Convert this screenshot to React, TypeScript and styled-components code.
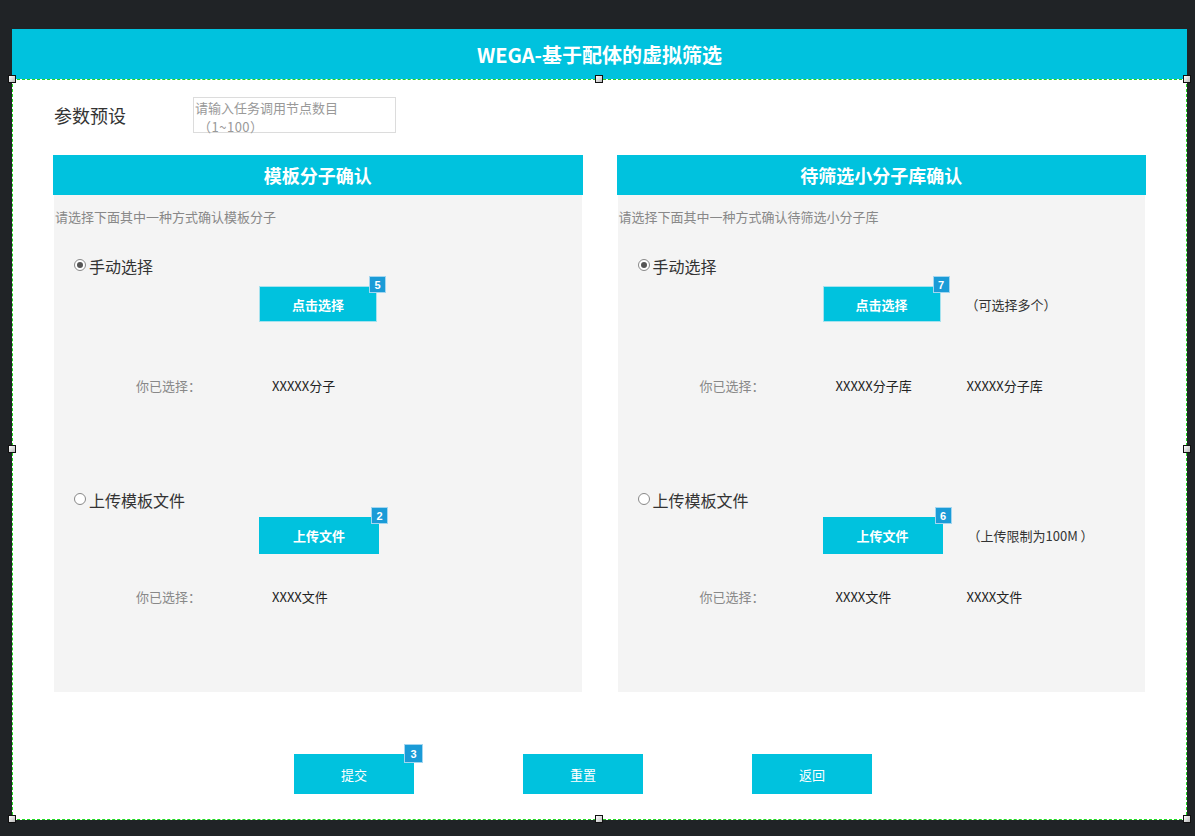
import React from 'react';
import styled, { createGlobalStyle } from 'styled-components';

const GlobalStyle = createGlobalStyle`
  html, body {
    margin: 0;
    padding: 0;
    background: #202326;
  }
  body {
    font-family: "Noto Sans CJK SC", "Liberation Sans", sans-serif;
  }
`;

const CYAN = '#00c2de';

const Page = styled.div`
  width: 1195px;
  height: 836px;
  padding: 29px 0 0 12px;
  box-sizing: border-box;
`;

const Frame = styled.div`
  position: relative;
  width: 1175px;
`;

const TitleBar = styled.div`
  height: 50px;
  background: ${CYAN};
  color: #fff;
  font-size: 20px;
  font-weight: 700;
  display: flex;
  align-items: center;
  justify-content: center;
`;

const Canvas = styled.div`
  height: 741px;
  box-sizing: border-box;
  border: 1px dashed #1ed81e;
  background: #fff;
  padding: 17px 40px 0 40px;
  display: flex;
  flex-direction: column;
`;

// selection handles of the editor, over the frame edges
const Handle = styled.span<{ $x: number; $y: number }>`
  position: absolute;
  left: ${p => p.$x - 4}px;
  top: ${p => p.$y - 4}px;
  width: 6px;
  height: 6px;
  border: 1px solid #111;
  background: linear-gradient(135deg, #ffffff, #b8b8b8);
`;

const ParamRow = styled.div`
  display: flex;
  align-items: center;
  height: 36px;
`;

const ParamLabel = styled.div`
  width: 140px;
  padding-left: 1px;
  box-sizing: border-box;
  font-size: 18px;
  color: #333;
`;

const FakeInput = styled.div`
  width: 203px;
  height: 36px;
  box-sizing: border-box;
  border: 1px solid #dcdcdc;
  font-size: 13px;
  line-height: 19px;
  color: #999;
  padding: 0 1px;
  margin-top: -1px;
  background: #fff;
`;

const Range = styled.span`
  letter-spacing: 0.5px;
  padding-left: 3px;
`;

const PanelRow = styled.div`
  display: flex;
  gap: 34px;
  margin-top: 22px;
`;

const PanelWrap = styled.div`
  flex: 1;
  display: flex;
  flex-direction: column;
`;

const PanelHead = styled.div`
  height: 40px;
  background: ${CYAN};
  color: #fff;
  font-size: 18px;
  font-weight: 700;
  display: flex;
  align-items: center;
  justify-content: center;
`;

const PanelBody = styled.div`
  height: 497px;
  margin: 0 1px;
  background: #f4f4f4;
  padding-top: 13px;
  box-sizing: border-box;
`;

const Desc = styled.div`
  font-size: 13px;
  line-height: 18px;
  color: #888;
  padding-left: 1px;
`;

const RadioRow = styled.div<{ $gap: number }>`
  display: flex;
  align-items: center;
  margin-top: ${p => p.$gap}px;
  padding-left: 20px;
  height: 20px;
  font-size: 16px;
  color: #333;
`;

const RadioDot = styled.span<{ $on?: boolean }>`
  width: 12px;
  height: 12px;
  box-sizing: border-box;
  border: 1px solid #888;
  border-radius: 50%;
  background: #fff;
  margin-right: 3px;
  margin-top: -3px;
  display: flex;
  align-items: center;
  justify-content: center;
  &::after {
    content: '';
    display: ${p => (p.$on ? 'block' : 'none')};
    width: 6px;
    height: 6px;
    border-radius: 50%;
    background: #555;
  }
`;

const ActionRow = styled.div<{ $gap: number }>`
  display: flex;
  align-items: center;
  margin-top: ${p => p.$gap}px;
  padding-left: 205px;
`;

const BadgeHost = styled.div`
  position: relative;
`;

const Btn = styled.div<{ $w: number; $h: number; $bold?: boolean; $outline?: boolean }>`
  width: ${p => p.$w}px;
  height: ${p => p.$h}px;
  box-sizing: border-box;
  background: ${CYAN};
  border: 1px solid ${p => (p.$outline ? '#a6e2ee' : CYAN)};
  color: #fff;
  font-size: 13px;
  font-weight: ${p => (p.$bold ? 700 : 400)};
  display: flex;
  align-items: center;
  justify-content: center;
`;

const Badge = styled.span<{ $size: number }>`
  position: absolute;
  right: -9px;
  top: -10px;
  width: ${p => p.$size}px;
  height: ${p => p.$size}px;
  box-sizing: border-box;
  background: #1a9bd7;
  border: 1px solid #a3d6f0;
  color: #fff;
  font-size: 11px;
  font-weight: 700;
  font-family: "Liberation Sans", sans-serif;
  display: flex;
  align-items: center;
  justify-content: center;
`;

const Note = styled.span`
  margin-left: 25px;
  font-size: 13px;
  color: #333;
`;

const PickedRow = styled.div<{ $gap: number }>`
  display: flex;
  align-items: center;
  height: 18px;
  margin-top: ${p => p.$gap}px;
  padding-left: 82px;
  font-size: 13px;
`;

const PickedLabel = styled.span`
  width: 136px;
  color: #888;
`;

const PickedValue = styled.span`
  width: 131px;
  color: #222;
`;

const FooterRow = styled.div`
  display: flex;
  gap: 109px;
  margin-top: 62px;
  padding-left: 241px;
`;

type PanelProps = {
  title: string;
  desc: string;
  manualBadge: string;
  uploadBadge: string;
  manualNote?: string;
  uploadNote?: string;
  manualPicks: string[];
  uploadPicks: string[];
};

const Panel = ({ title, desc, manualBadge, uploadBadge, manualNote, uploadNote, manualPicks, uploadPicks }: PanelProps) => (
  <PanelWrap>
    <PanelHead>{title}</PanelHead>
    <PanelBody>
      <Desc>{desc}</Desc>
      <RadioRow $gap={30}>
        <RadioDot $on />
        手动选择
      </RadioRow>
      <ActionRow $gap={10}>
        <BadgeHost>
          <Btn $w={118} $h={36} $bold $outline>点击选择</Btn>
          <Badge $size={17}>{manualBadge}</Badge>
        </BadgeHost>
        {manualNote && <Note>{manualNote}</Note>}
      </ActionRow>
      <PickedRow $gap={54}>
        <PickedLabel>你已选择：</PickedLabel>
        {manualPicks.map((v, i) => <PickedValue key={i}>{v}</PickedValue>)}
      </PickedRow>
      <RadioRow $gap={96}>
        <RadioDot />
        上传模板文件
      </RadioRow>
      <ActionRow $gap={7}>
        <BadgeHost>
          <Btn $w={120} $h={37} $bold>上传文件</Btn>
          <Badge $size={17}>{uploadBadge}</Badge>
        </BadgeHost>
        {uploadNote && <Note>{uploadNote}</Note>}
      </ActionRow>
      <PickedRow $gap={33}>
        <PickedLabel>你已选择：</PickedLabel>
        {uploadPicks.map((v, i) => <PickedValue key={i}>{v}</PickedValue>)}
      </PickedRow>
    </PanelBody>
  </PanelWrap>
);

const handles = [
  [0, 50], [587, 50], [1175, 50],
  [0, 420], [1175, 420],
  [0, 790], [587, 790], [1175, 790],
];

export default function App() {
  return (
    <Page>
      <GlobalStyle />
      <Frame>
        <TitleBar>WEGA-基于配体的虚拟筛选</TitleBar>
        <Canvas>
          <ParamRow>
            <ParamLabel>参数预设</ParamLabel>
            <FakeInput>
              请输入任务调用节点数目
              <br />
              <Range>（1~100）</Range>
            </FakeInput>
          </ParamRow>
          <PanelRow>
            <Panel
              title="模板分子确认"
              desc="请选择下面其中一种方式确认模板分子"
              manualBadge="5"
              uploadBadge="2"
              manualPicks={['XXXXX分子']}
              uploadPicks={['XXXX文件']}
            />
            <Panel
              title="待筛选小分子库确认"
              desc="请选择下面其中一种方式确认待筛选小分子库"
              manualBadge="7"
              uploadBadge="6"
              manualNote="（可选择多个）"
              uploadNote="（上传限制为100M ）"
              manualPicks={['XXXXX分子库', 'XXXXX分子库']}
              uploadPicks={['XXXX文件', 'XXXX文件']}
            />
          </PanelRow>
          <FooterRow>
            <BadgeHost>
              <Btn $w={120} $h={40}>提交</Btn>
              <Badge $size={19}>3</Badge>
            </BadgeHost>
            <Btn $w={120} $h={40}>重置</Btn>
            <Btn $w={120} $h={40}>返回</Btn>
          </FooterRow>
        </Canvas>
        {handles.map(([x, y], i) => <Handle key={i} $x={x} $y={y} />)}
      </Frame>
    </Page>
  );
}
